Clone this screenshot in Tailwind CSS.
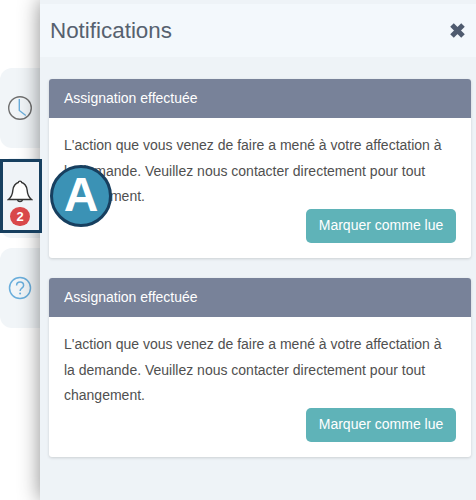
<!DOCTYPE html>
<html lang="fr">
<head>
<meta charset="UTF-8">
<title>Notifications</title>
<script src="https://cdn.jsdelivr.net/npm/@tailwindcss/browser@4"></script>
</head>
<body class="bg-white overflow-hidden font-['Liberation_Sans',Arial,sans-serif]">
<div class="relative flex w-[476px] h-[500px] overflow-hidden">
  <!-- Side tabs -->
  <aside class="w-[40px] shrink-0 pt-[68px] flex flex-col gap-[10px]">
    <div class="h-[80px] rounded-l-[12px] bg-[#f1f5f8] flex items-center justify-center">
      <svg width="26" height="26" viewBox="0 0 26 26" fill="none">
        <circle cx="13" cy="13" r="11.300" stroke="#707070" stroke-width="1.400"/>
        <path d="M12.300 4V15.500L18.800 20.500" stroke="#6aaedc" stroke-width="1.400"/>
      </svg>
    </div>
    <div class="h-[80px] rounded-l-[12px] bg-[#f1f5f8]">
      <div class="relative z-10 h-[74px] w-[42px] mt-[1px] border-[3px] border-[#173f5f] bg-[#eff3f7] flex flex-col items-center pt-[18px] pr-[2px]">
        <svg width="26" height="24" viewBox="0 0 26 24" fill="#fff" stroke="#333" stroke-width="1.400" class="shrink-0">
          <path d="M1.500 19.500c3-2.500 4-4.500 4.300-9C6 6 9 3 11.300 2.500 11.500.6 14.500.6 14.700 2.500 17 3 20 6 20.200 10.500c.3 4.500 1.300 6.500 4.300 9z"/>
          <path d="M10.500 19.800c.6 2.300 4.400 2.300 5 0" fill="none"/>
        </svg>
        <span class="mt-[3px] w-[20px] h-[19px] rounded-full bg-[#d9484a] text-white text-[13px] font-bold flex items-center justify-center">2</span>
      </div>
    </div>
    <div class="h-[80px] rounded-l-[12px] bg-[#f1f5f8] flex items-center justify-center">
      <svg width="24" height="24" viewBox="0 0 24 24" fill="none">
        <circle cx="12" cy="12" r="10.500" stroke="#6aaedc" stroke-width="1.500"/>
        <path d="M8.600 9.500c0-4.600 7-4.600 7 0 0 2.800-3.500 2.600-3.500 5.500" stroke="#6aaedc" stroke-width="1.500"/>
        <circle cx="12.100" cy="17.500" r="1" fill="#6aaedc"/>
      </svg>
    </div>
  </aside>

  <!-- Panel -->
  <main class="relative w-[436px] h-[500px] bg-[#eef3f7] pt-[4px] shadow-[0_0_20px_rgba(0,0,0,0.45)]">
    <header class="h-[53px] bg-[#f3f8fc] flex items-center justify-between pl-[10px] pr-[10px]">
      <h1 class="text-[22.400px] text-[#56616f]">Notifications</h1>
      <svg width="17" height="17" viewBox="0 0 17 17" fill="none">
        <path d="M3 3L14 14M14 3L3 14" stroke="#4f5b6f" stroke-width="5"/>
      </svg>
    </header>
    <div class="pl-[9px] pr-[5px] pt-[22px] flex flex-col gap-[20px]">
      <section class="h-[179px] bg-white rounded-[3px] shadow-[0_1px_3px_rgba(0,0,0,0.15)] overflow-hidden">
        <div class="h-[39px] bg-[#788299] text-white text-[14px] flex items-center px-[15px]">Assignation effectuée</div>
        <div class="px-[15px] pt-[15px]">
          <p class="text-[14px] leading-[25.500px] text-[#505050]">L'action que vous venez de faire a mené à votre affectation à la demande. Veuillez nous contacter directement pour tout changement.</p>
          <div class="flex justify-end mt-[-1px]">
            <button class="h-[34px] w-[150px] rounded-[5px] bg-[#5fb3b8] text-white text-[14px]">Marquer comme lue</button>
          </div>
        </div>
      </section>
      <section class="h-[179px] bg-white rounded-[3px] shadow-[0_1px_3px_rgba(0,0,0,0.15)] overflow-hidden">
        <div class="h-[39px] bg-[#788299] text-white text-[14px] flex items-center px-[15px]">Assignation effectuée</div>
        <div class="px-[15px] pt-[15px]">
          <p class="text-[14px] leading-[25.500px] text-[#505050]">L'action que vous venez de faire a mené à votre affectation à la demande. Veuillez nous contacter directement pour tout changement.</p>
          <div class="flex justify-end mt-[-1px]">
            <button class="h-[34px] w-[150px] rounded-[5px] bg-[#5fb3b8] text-white text-[14px]">Marquer comme lue</button>
          </div>
        </div>
      </section>
    </div>
  </main>

  <!-- Callout badge -->
  <div class="absolute left-[50px] top-[165px] w-[62px] h-[62px] rounded-full bg-[#3b92b5] border-[3px] border-[#173f5f] flex items-center justify-center text-white text-[48px] font-bold leading-none pb-[2px]">A</div>
</div>
</body>
</html>
